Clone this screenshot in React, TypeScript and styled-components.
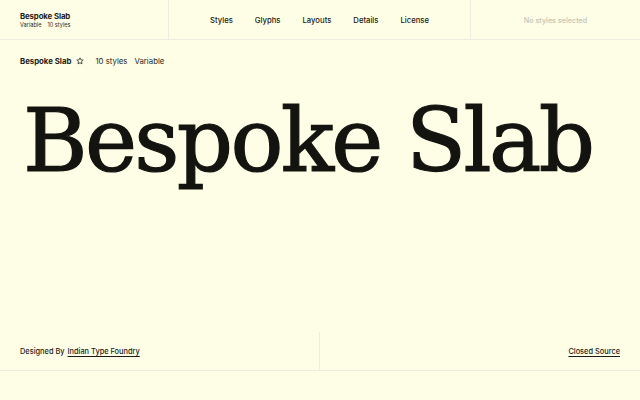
import React from 'react';
import styled, { createGlobalStyle } from 'styled-components';

const GlobalStyle = createGlobalStyle`
  html, body {
    margin: 0;
    padding: 0;
    background: #fefee6;
  }
  body {
    font-family: Inter, "Liberation Sans", sans-serif;
    color: #1a1a16;
  }
`;

const Page = styled.div`
  width: 640px;
  height: 400px;
  display: flex;
  flex-direction: column;
  background: #fefee6;
  overflow: hidden;
`;

const TopBar = styled.header`
  height: 39px;
  display: grid;
  grid-template-columns: 169px 1fr 170px;
  border-bottom: 1px solid #ecece0;
`;

const Cell = styled.div<{ $divider?: 'left' | 'right' }>`
  display: flex;
  align-items: center;
  ${({ $divider }) => $divider === 'right' && 'border-right: 1px solid #ecece0;'}
  ${({ $divider }) => $divider === 'left' && 'border-left: 1px solid #ecece0;'}
`;

const Brand = styled(Cell)`
  flex-direction: column;
  align-items: flex-start;
  justify-content: center;
  padding-left: 20px;
  gap: 1px;
`;

const BrandName = styled.div`
  font-size: 7.8px;
  font-weight: 700;
  letter-spacing: -0.1px;
`;

const BrandMeta = styled.div`
  font-size: 5.6px;
  display: flex;
  gap: 6px;
  color: #2a2a24;
`;

const Nav = styled.nav`
  display: flex;
  justify-content: center;
  align-items: center;
  gap: 22px;
  padding-top: 2px;
`;

const NavItem = styled.a`
  font-size: 7.7px;
  font-weight: 500;
  color: #1a1a16;
  text-decoration: none;
`;

const Status = styled(Cell)`
  justify-content: center;
  padding-top: 2px;
  font-size: 7.2px;
  font-weight: 500;
  color: #c4c4b4;
`;

const InfoRow = styled.div`
  height: 42px;
  display: flex;
  align-items: center;
  padding-left: 20px;
  font-size: 7.8px;
`;

const InfoName = styled.span`
  font-weight: 700;
`;

const Star = styled.svg`
  margin: 0 0 0 5px;
  color: #1a1a16;
`;

const Meta = styled.span<{ $gap?: number }>`
  margin-left: ${({ $gap }) => $gap ?? 8}px;
  color: #2a2a24;
`;

const Specimen = styled.div`
  flex: 1;
  padding: 15px 0 0 23px;
  display: flex;
  align-items: flex-start;
`;

const Display = styled.h1`
  margin: 0;
  font-family: "DejaVu Serif", serif;
  font-weight: 400;
  font-size: 88px;
  line-height: 1;
  letter-spacing: -2.7px;
  -webkit-text-stroke: 1.2px #13130f;
  color: #13130f;
  white-space: nowrap;
`;

const Footer = styled.footer`
  height: 38px;
  display: grid;
  grid-template-columns: 319px 1fr;
  border-bottom: 1px solid #ecece0;
  margin-bottom: 29px;
  font-size: 7.4px;
  font-weight: 500;
`;

const FootCell = styled.div<{ $end?: boolean }>`
  display: flex;
  align-items: center;
  padding: 0 20px;
  justify-content: ${({ $end }) => ($end ? 'flex-end' : 'flex-start')};
  ${({ $end }) => $end && 'border-left: 1px solid #ecece0;'}
`;

const Link = styled.a`
  color: #1a1a16;
  text-decoration: underline;
  text-underline-offset: 1.5px;
  margin-left: 3px;
`;

export default function App() {
  return (
    <>
      <GlobalStyle />
      <Page>
        <TopBar>
          <Brand $divider="right">
            <BrandName>Bespoke Slab</BrandName>
            <BrandMeta>
              <span>Variable</span>
              <span>10 styles</span>
            </BrandMeta>
          </Brand>
          <Nav>
            {['Styles', 'Glyphs', 'Layouts', 'Details', 'License'].map((n) => (
              <NavItem key={n}>{n}</NavItem>
            ))}
          </Nav>
          <Status $divider="left">No styles selected</Status>
        </TopBar>
        <InfoRow>
          <InfoName>Bespoke Slab</InfoName>
          <Star width="8" height="8" viewBox="0 0 24 24" fill="none" stroke="currentColor" strokeWidth="2.2" strokeLinejoin="round">
            <path d="M12 2.5l2.9 6.1 6.6.8-4.9 4.6 1.3 6.6L12 17.3l-5.9 3.3 1.3-6.6-4.9-4.6 6.6-.8z" />
          </Star>
          <Meta $gap={11}>10 styles</Meta>
          <Meta $gap={7}>Variable</Meta>
        </InfoRow>
        <Specimen>
          <Display>Bespoke Slab</Display>
        </Specimen>
        <Footer>
          <FootCell>
            Designed By<Link>Indian Type Foundry</Link>
          </FootCell>
          <FootCell $end>
            <Link>Closed Source</Link>
          </FootCell>
        </Footer>
      </Page>
    </>
  );
}
